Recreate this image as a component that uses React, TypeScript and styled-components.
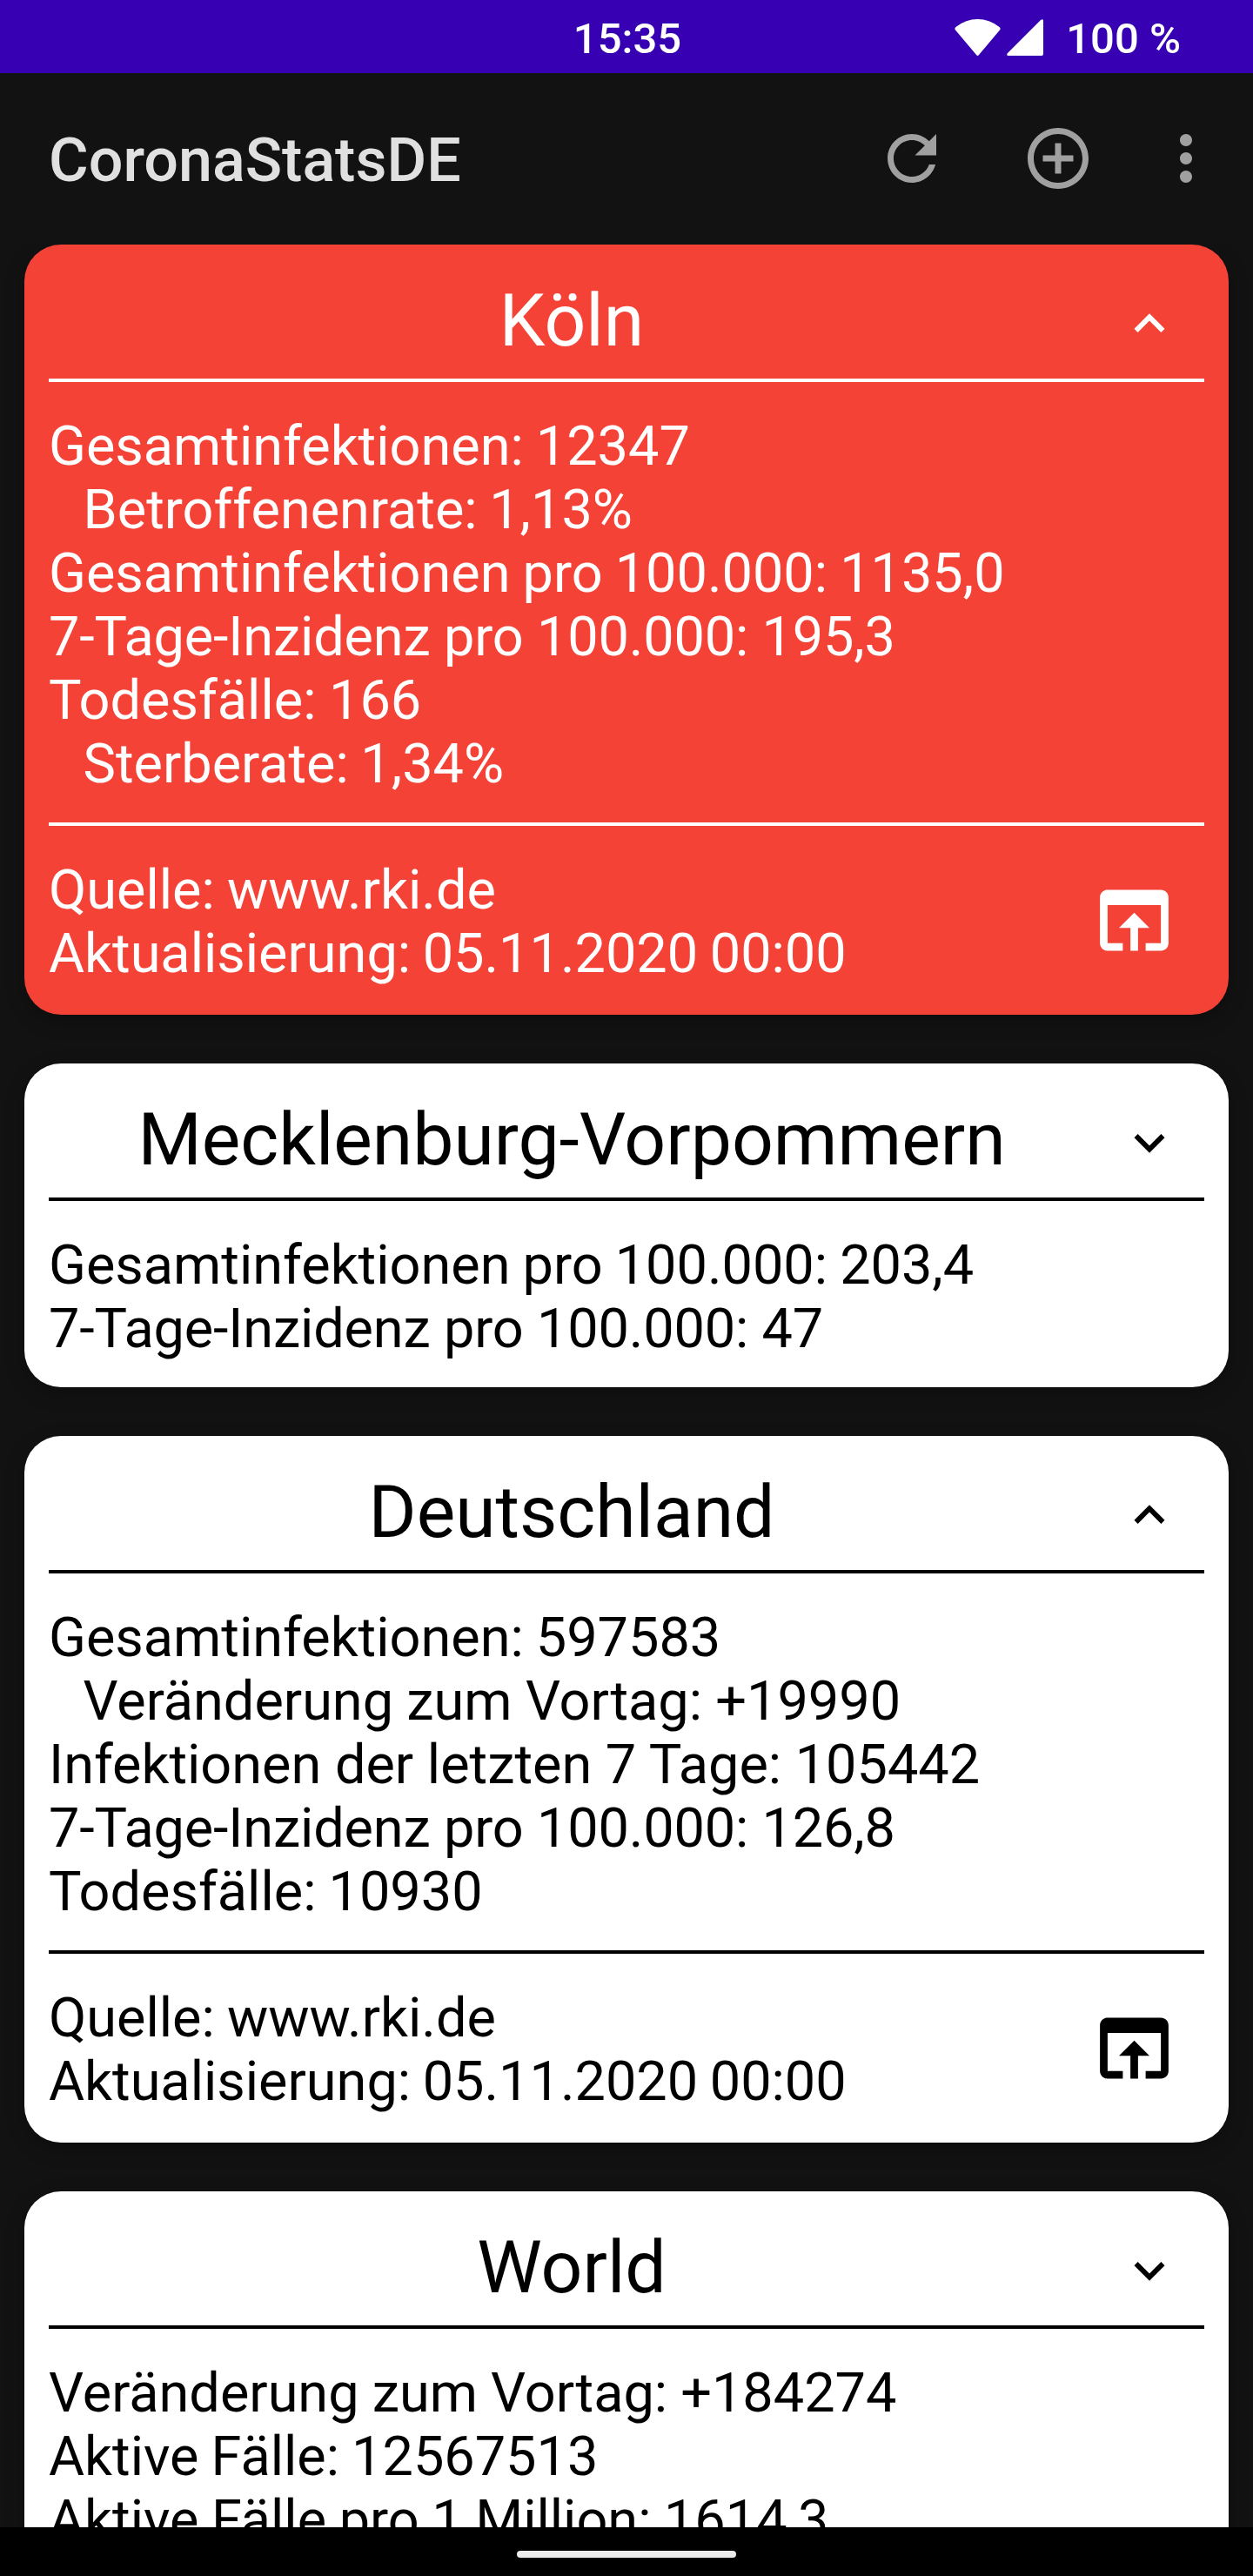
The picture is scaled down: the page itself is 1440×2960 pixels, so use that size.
import React from "react";
import styled, { createGlobalStyle } from "styled-components";

const GlobalStyle = createGlobalStyle`
  * { box-sizing: border-box; }
  body { margin: 0; background: #121212; }
`;

const Screen = styled.div`
  display: flex;
  flex-direction: column;
  width: 1440px;
  height: 2960px;
  overflow: hidden;
  background: #121212;
  font-family: Roboto, "Liberation Sans", sans-serif;
`;

const StatusBar = styled.header`
  display: grid;
  grid-template-columns: 1fr auto 1fr;
  align-items: center;
  flex: none;
  height: 84px;
  padding: 4px 83px 0 85px;
  background: #3700b3;
  color: #fff;
  font-size: 49px;
  font-weight: 500;
  line-height: 57px;
`;

const Clock = styled.time`
  grid-column: 2;
`;

const StatusIcons = styled.div`
  display: flex;
  align-items: center;
  justify-content: flex-end;
`;

const StatusGlyph = styled.svg<{ $width: number; $gap: number }>`
  width: ${(p) => p.$width}px;
  height: 42px;
  margin: -3px ${(p) => p.$gap}px 0 0;
  fill: currentColor;
`;

const AppBar = styled.div`
  display: flex;
  align-items: center;
  flex: none;
  height: 197px;
  padding: 0 35px 1px 56px;
  color: #a0a0a0;
`;

const AppTitle = styled.h1`
  flex: 1;
  margin: 4px 0 0;
  color: #e0e0e0;
  font-size: 70px;
  font-weight: 500;
  line-height: 82px;
`;

const IconButton = styled.button<{ $gap?: number }>`
  display: flex;
  margin: 0 ${(p) => p.$gap ?? 0}px 0 0;
  padding: 0;
  border: 0;
  background: none;
  color: inherit;
`;

const Icon = styled.svg<{ $size: number }>`
  display: block;
  width: ${(p) => p.$size}px;
  height: ${(p) => p.$size}px;
  fill: currentColor;
`;

const CardList = styled.main`
  display: flex;
  flex: 1;
  flex-direction: column;
  gap: 56px;
  min-height: 0;
  padding: 0 28px;
  overflow: hidden;
`;

const Card = styled.article<{ $alert?: boolean }>`
  flex: none;
  padding: 0 28px;
  border-radius: 42px;
  background: ${(p) => (p.$alert ? "#f44336" : "#fff")};
  color: ${(p) => (p.$alert ? "#fff" : "#000")};
  box-shadow: 0 7px 22px rgba(0, 0, 0, 0.25);
`;

const CardHeader = styled.div`
  display: flex;
  align-items: center;
  gap: 28px;
  height: 158px;
  padding: 28px 28px 0 0;
  border-bottom: 4px solid currentColor;
`;

const CardTitle = styled.h2`
  flex: 1;
  margin: 0 0 6px;
  font-size: 84px;
  font-weight: 400;
  line-height: 98px;
  text-align: center;
`;

const Stats = styled.div`
  padding: 37px 0 31px;
  font-size: 63px;
  line-height: 73px;
  white-space: nowrap;
`;

const StatLine = styled.div<{ $indent?: boolean; $word?: number; $letter?: number }>`
  padding-left: ${(p) => (p.$indent ? 39.5 : 0)}px;
  word-spacing: ${(p) => p.$word ?? -1.5}px;
  letter-spacing: ${(p) => p.$letter ?? 0}px;
`;

const CardFooter = styled.div`
  display: flex;
  align-items: flex-start;
  justify-content: space-between;
  padding: 0 28px 3px 0;
  border-top: 4px solid currentColor;
`;

const SourceButton = styled(IconButton)`
  margin-top: 55.5px;
`;

interface Line {
  text: string;
  indent?: boolean;
  word?: number;
  letter?: number;
}

interface Region {
  name: string;
  alert?: boolean;
  expanded: boolean;
  lines: Line[];
  source?: Line[];
}

const rki: Line[] = [
  { text: "Quelle: www.rki.de" },
  { text: "Aktualisierung: 05.11.2020 00:00", word: -2 },
];

const incidence = (value: string): Line => ({
  text: `7-Tage-Inzidenz pro 100.000: ${value}`,
  word: 0,
  letter: -0.16,
});

const regions: Region[] = [
  {
    name: "Köln",
    alert: true,
    expanded: true,
    lines: [
      { text: "Gesamtinfektionen: 12347" },
      { text: "Betroffenenrate: 1,13%", indent: true, word: -2 },
      { text: "Gesamtinfektionen pro 100.000: 1135,0" },
      incidence("195,3"),
      { text: "Todesfälle: 166", word: -1 },
      { text: "Sterberate: 1,34%", indent: true, word: -2 },
    ],
    source: rki,
  },
  {
    name: "Mecklenburg-Vorpommern",
    expanded: false,
    lines: [{ text: "Gesamtinfektionen pro 100.000: 203,4" }, incidence("47")],
  },
  {
    name: "Deutschland",
    expanded: true,
    lines: [
      { text: "Gesamtinfektionen: 597583" },
      { text: "Veränderung zum Vortag: +19990", indent: true, word: -0.3 },
      { text: "Infektionen der letzten 7 Tage: 105442", word: 0 },
      incidence("126,8"),
      { text: "Todesfälle: 10930" },
    ],
    source: rki,
  },
  {
    name: "World",
    expanded: false,
    lines: [
      { text: "Veränderung zum Vortag: +184274", word: -0.5 },
      { text: "Aktive Fälle: 12567513" },
      { text: "Aktive Fälle pro 1 Million: 1614,3", word: -1.1 },
    ],
  },
];

const NavBar = styled.footer`
  display: flex;
  justify-content: center;
  flex: none;
  height: 56px;
  padding-top: 27px;
  background: #000;
`;

const HomeHandle = styled.div`
  width: 252px;
  height: 8px;
  border-radius: 4px;
  background: #ebebeb;
`;

const paths = {
  refresh:
    "M17.65 6.35C16.2 4.9 14.21 4 12 4c-4.42 0-7.99 3.58-7.99 8s3.57 8 7.99 8c3.73 0 6.84-2.55 7.73-6h-2.08c-.82 2.33-3.04 4-5.65 4-3.31 0-6-2.69-6-6s2.69-6 6-6c1.66 0 3.14.69 4.22 1.78L13 11h7V4l-2.35 2.35z",
  add: "M13 7h-2v4H7v2h4v4h2v-4h4v-2h-4V7zm-1-5C6.48 2 2 6.48 2 12s4.48 10 10 10 10-4.48 10-10S17.52 2 12 2zm0 18c-4.41 0-8-3.59-8-8s3.59-8 8-8 8 3.59 8 8-3.59 8-8 8z",
  more: "M12 8c1.1 0 2-.9 2-2s-.9-2-2-2-2 .9-2 2 .9 2 2 2zm0 2c-1.1 0-2 .9-2 2s.9 2 2 2 2-.9 2-2-.9-2-2-2zm0 6c-1.1 0-2 .9-2 2s.9 2 2 2 2-.9 2-2-.9-2-2-2z",
  less: "M12 8l-6 6 1.41 1.41L12 10.83l4.59 4.58L18 14z",
  expand: "M16.59 8.59L12 13.17 7.41 8.59 6 10l6 6 6-6z",
  browser:
    "M19 4H5c-1.11 0-2 .9-2 2v12c0 1.1.89 2 2 2h4v-2H5V8h14v10h-4v2h4c1.1 0 2-.9 2-2V6c0-1.1-.89-2-2-2zm-7 6l-4 4h3v6h2v-6h3l-4-4z",
};

function Glyph({ name, size }: { name: keyof typeof paths; size: number }) {
  return (
    <Icon $size={size} viewBox="0 0 24 24" aria-hidden="true">
      <path d={paths[name]} />
    </Icon>
  );
}

function StatBlock({ lines }: { lines: Line[] }) {
  return (
    <Stats>
      {lines.map((line) => (
        <StatLine key={line.text} $indent={line.indent} $word={line.word} $letter={line.letter}>
          {line.text}
        </StatLine>
      ))}
    </Stats>
  );
}

function RegionCard({ region }: { region: Region }) {
  return (
    <Card $alert={region.alert}>
      <CardHeader>
        <CardTitle>{region.name}</CardTitle>
        <IconButton>
          <Glyph name={region.expanded ? "less" : "expand"} size={70} />
        </IconButton>
      </CardHeader>
      <StatBlock lines={region.lines} />
      {region.source && (
        <CardFooter>
          <StatBlock lines={region.source} />
          <SourceButton>
            <Glyph name="browser" size={105} />
          </SourceButton>
        </CardFooter>
      )}
    </Card>
  );
}

export default function App() {
  return (
    <Screen>
      <GlobalStyle />
      <StatusBar>
        <Clock>15:35</Clock>
        <StatusIcons>
          <StatusGlyph $width={53} $gap={7} viewBox="0 0 53 42">
            <path d="M1 12.500Q-.5 10.500 1.500 9Q13 0 26.500 0Q40 0 51.500 9Q53.500 10.500 52 12.500L28 41Q26.500 43 25 41Z" />
          </StatusGlyph>
          <StatusGlyph $width={42} $gap={26} viewBox="0 0 42 42">
            <path d="M1 39L39 1Q42-1 42 2V40Q42 42 40 42H2Q-1 42 1 39Z" />
          </StatusGlyph>
          <span>100 %</span>
        </StatusIcons>
      </StatusBar>
      <AppBar>
        <AppTitle>CoronaStatsDE</AppTitle>
        <IconButton $gap={84}>
          <Glyph name="refresh" size={84} />
        </IconButton>
        <IconButton $gap={63}>
          <Glyph name="add" size={84} />
        </IconButton>
        <IconButton>
          <Glyph name="more" size={84} />
        </IconButton>
      </AppBar>
      <CardList>
        {regions.map((region) => (
          <RegionCard key={region.name} region={region} />
        ))}
      </CardList>
      <NavBar>
        <HomeHandle />
      </NavBar>
    </Screen>
  );
}
